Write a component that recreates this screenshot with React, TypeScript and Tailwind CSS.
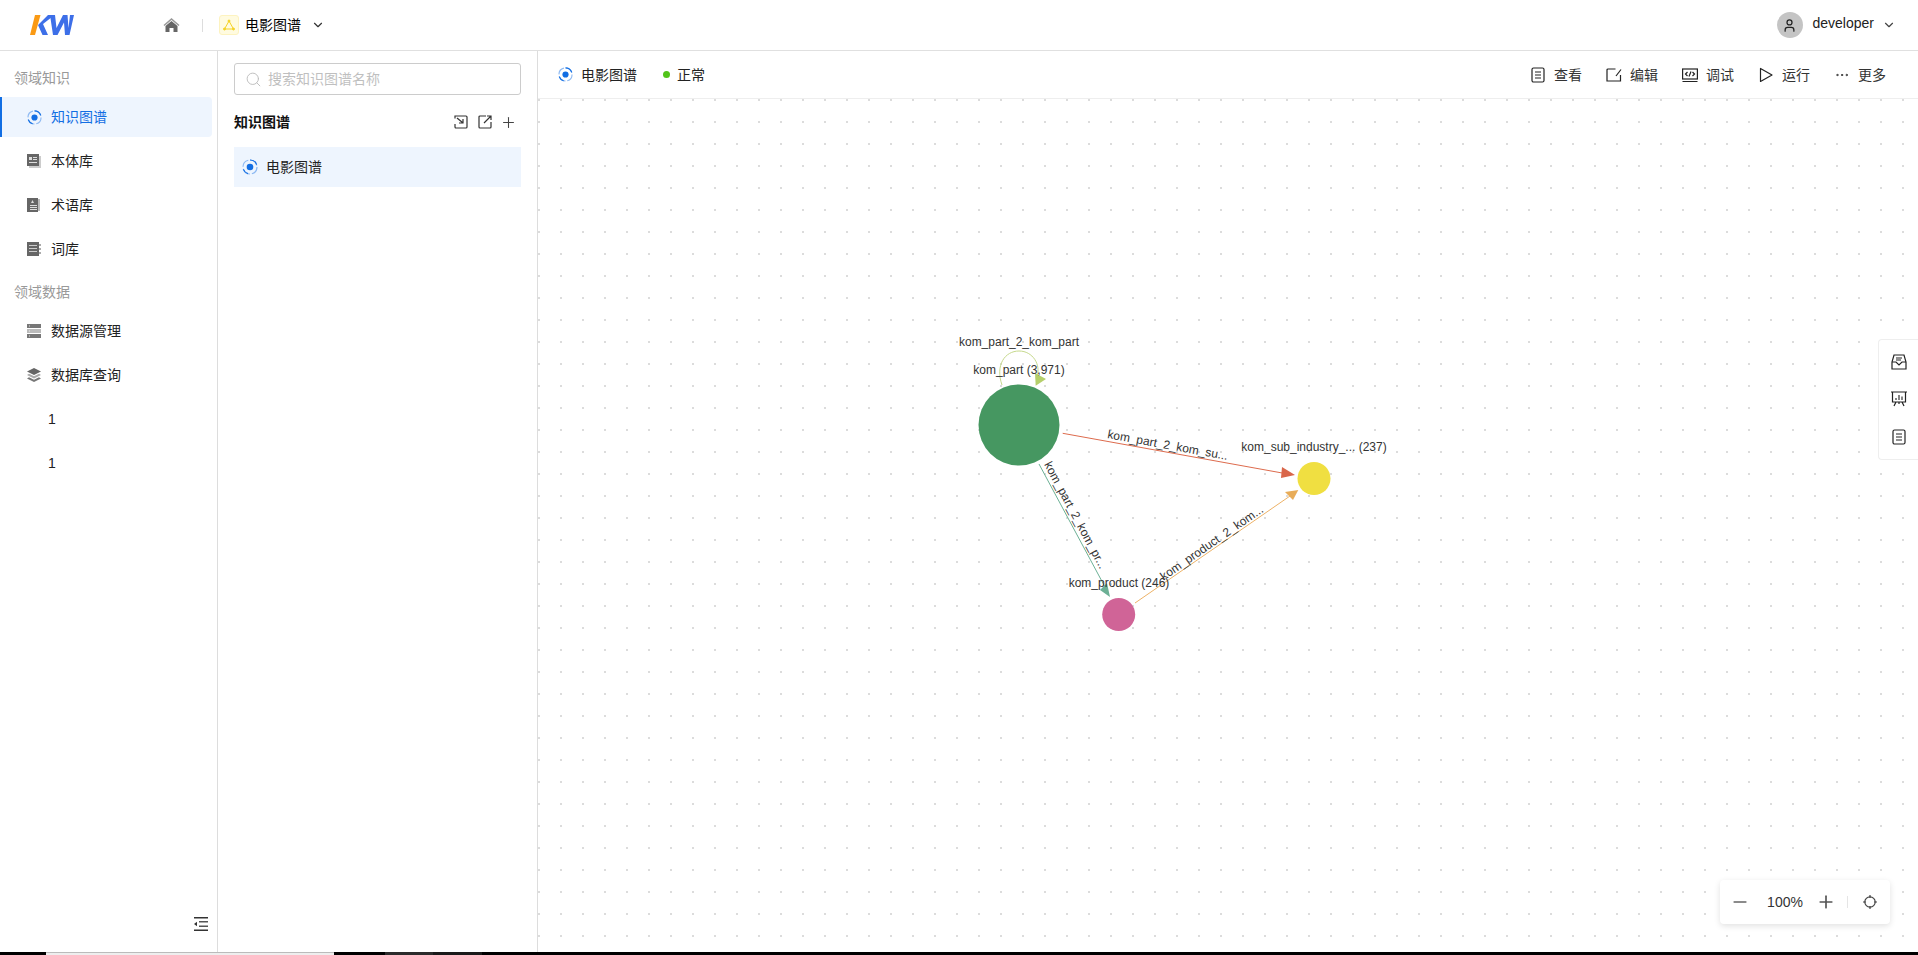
import type { ReactNode } from 'react';
import { ChevronDown, Search, Plus, Minus, User, Ellipsis } from 'lucide-react';

const FONT = '"Liberation Sans", "Noto Sans CJK SC", sans-serif';

function GraphIcon({ size = 16 }: { size?: number }) {
  return (
    <svg className="shrink-0" width={size} height={size} viewBox="0 0 16 16" fill="none">
      <circle cx="8" cy="8" r="7" stroke="#8db9f2" strokeWidth="1.2" strokeDasharray="9 2" />
      <path d="M8 1a7 7 0 0 1 6.600 4.600M1.400 10.400A7 7 0 0 0 6 14.700" stroke="#126ee3" strokeWidth="1.2" />
      <circle cx="8" cy="8" r="3.300" fill="#126ee3" />
    </svg>
  );
}

function BookIcon() {
  return (
    <svg width="14" height="14" viewBox="0 0 14 14">
      <rect x="0" y="0" width="12" height="12" fill="#666" />
      <rect x="12" y="2" width="2" height="12" fill="#ccc" />
      <rect x="2" y="12" width="12" height="2" fill="#ccc" />
      <rect x="2" y="3" width="3" height="3" fill="#ddd" />
      <rect x="6" y="3" width="4" height="1" fill="#ddd" />
      <rect x="6" y="5" width="4" height="1" fill="#ddd" />
      <rect x="2" y="8" width="8" height="1" fill="#ddd" />
    </svg>
  );
}

function TermIcon() {
  return (
    <svg width="14" height="14" viewBox="0 0 14 14">
      <rect x="0" y="0" width="11" height="14" fill="#666" />
      <rect x="11" y="1" width="2" height="12" fill="#bbb" />
      <path d="M4 5l1.500-3L7 5z" fill="#ddd" />
      <rect x="3" y="7" width="7" height="1" fill="#ddd" />
      <rect x="3" y="9" width="7" height="1" fill="#ddd" />
      <rect x="3" y="11" width="7" height="1" fill="#ddd" />
    </svg>
  );
}

function LexiconIcon() {
  return (
    <svg width="14" height="14" viewBox="0 0 14 14">
      <rect x="0" y="0" width="12" height="14" fill="#666" />
      <rect x="12" y="2" width="2" height="2" fill="#aaa" />
      <rect x="12" y="6" width="2" height="2" fill="#aaa" />
      <rect x="12" y="10" width="2" height="2" fill="#aaa" />
      <rect x="2" y="3" width="8" height="1" fill="#ccc" />
      <rect x="2" y="6" width="8" height="1" fill="#ccc" />
      <rect x="2" y="9" width="8" height="1" fill="#ccc" />
    </svg>
  );
}

function ServerIcon() {
  return (
    <svg width="14" height="14" viewBox="0 0 14 14">
      <rect x="0" y="0" width="14" height="4" fill="#777" />
      <rect x="0" y="5" width="14" height="4" fill="#bbb" />
      <rect x="0" y="10" width="14" height="4" fill="#777" />
      <rect x="2" y="1.500" width="1" height="1" fill="#ddd" />
      <rect x="2" y="6.500" width="1" height="1" fill="#eee" />
      <rect x="2" y="11.500" width="1" height="1" fill="#ddd" />
    </svg>
  );
}

function LayersIcon() {
  return (
    <svg width="14" height="14" viewBox="0 0 14 14">
      <path d="M7 0l7 3.500L7 7 0 3.500z" fill="#666" />
      <path d="M2 5.800L7 8.300l5-2.500 2 1.100L7 10.400 0 6.900z" fill="#aaa" />
      <path d="M2 9.300l5 2.500 5-2.500 2 1.100L7 14l-7-3.600z" fill="#777" />
    </svg>
  );
}

function DocIcon() {
  return (
    <svg width="16" height="16" viewBox="0 0 16 16" fill="none" stroke="#222" strokeWidth="1.200">
      <rect x="2" y="1" width="12" height="14" rx="1.500" />
      <path d="M5 5h6M5 8h6M5 11h6" />
    </svg>
  );
}

function EditIcon() {
  return (
    <svg width="16" height="16" viewBox="0 0 16 16" fill="none" stroke="#222" strokeWidth="1.200">
      <path d="M9.500 2H2a1 1 0 0 0-1 1v11h13.500V8" />
      <path d="M10 9l5-6.500" />
    </svg>
  );
}

function CodeIcon() {
  return (
    <svg width="16" height="16" viewBox="0 0 16 16" fill="none" stroke="#222" strokeWidth="1.200">
      <rect x="0.600" y="2" width="14.800" height="10" />
      <path d="M0.500 14.500h15M5.500 5L3.500 7l2 2M10.500 5l2 2-2 2M9 4.500L7 9.500" />
    </svg>
  );
}

function PlayIcon() {
  return (
    <svg width="16" height="16" viewBox="0 0 16 16" fill="none" stroke="#222" strokeWidth="1.200">
      <path d="M2.500 1.500v13L14 8z" strokeLinejoin="round" />
    </svg>
  );
}

function ImportIcon() {
  return (
    <svg width="14" height="14" viewBox="0 0 14 14" fill="none" stroke="#333" strokeWidth="1.200">
      <path d="M1 3.500V1h11a1 1 0 0 1 1 1v10a1 1 0 0 1-1 1H2a1 1 0 0 1-1-1V9" />
      <path d="M3 3l5.500 4.500M9 4v4H5" />
    </svg>
  );
}

function ExportIcon() {
  return (
    <svg width="14" height="14" viewBox="0 0 14 14" fill="none" stroke="#333" strokeWidth="1.200">
      <path d="M8 1H2a1 1 0 0 0-1 1v10a1 1 0 0 0 1 1h10a1 1 0 0 0 1-1V7" />
      <path d="M6 8l6.500-6.500M9 1h4v4" />
    </svg>
  );
}

function HomeIcon() {
  return (
    <svg width="17" height="14" viewBox="0 0 16 14">
      <path d="M8 0L0 7l1 1 7-6 7 6 1-1z" fill="#999" />
      <path d="M8 3L2 8v6h4v-4h4v4h4V8z" fill="#666" />
    </svg>
  );
}

function KwLogo() {
  return (
    <svg width="44" height="20" viewBox="0 0 44 20">
      <path d="M5 0h5.500L5 20H0z" fill="#fa9a14" />
      <path d="M18 0h6.500L13 9l5 11h-5.500L8 10z" fill="#3d6fe8" />
      <path d="M20 0h5l1.500 13L33 0h4.500l1 13L40 0h4l-4.500 20h-4.500l-1-12.500L27.500 20H23z" fill="#3d6fe8" />
    </svg>
  );
}

function CollapseIcon() {
  return (
    <svg width="14" height="14" viewBox="0 0 14 14">
      <rect x="0" y="0" width="14" height="1.500" fill="#333" />
      <rect x="5" y="4" width="9" height="1.500" fill="#555" />
      <rect x="5" y="8.500" width="9" height="1.500" fill="#555" />
      <rect x="0" y="12.500" width="14" height="1.500" fill="#333" />
      <path d="M0 7l3-2.200v4.400z" fill="#333" />
    </svg>
  );
}

function InboxIcon() {
  return (
    <svg width="16" height="16" viewBox="0 0 16 16" fill="none" stroke="#222" strokeWidth="1.200">
      <path d="M3 1h10l2 7v7H1V8z" />
      <path d="M1 8h4l3 3 3-3h4M5 4h6M5 6h5" />
    </svg>
  );
}

function BoardIcon() {
  return (
    <svg width="16" height="16" viewBox="0 0 16 16" fill="none" stroke="#222" strokeWidth="1.200">
      <path d="M0 1h16M1.500 1v10h13V1M5 11l-2 4M11 11l2 4M8 11v2" />
      <path d="M5 9V7M8 9V4M11 9V5.500" strokeWidth="1.600" stroke="#666" />
    </svg>
  );
}

function CrosshairIcon() {
  return (
    <svg width="14" height="14" viewBox="0 0 14 14" fill="none" stroke="#444" strokeWidth="1.200">
      <circle cx="7" cy="7" r="5.200" />
      <path d="M7 0v3M7 11v3M0 7h3M11 7h3" />
    </svg>
  );
}

function GroupTitle({ children, className }: { children: ReactNode; className?: string }) {
  return <div className={`pl-[14px] h-[28px] leading-[28px] text-sm text-[#999] ${className ?? ''}`}>{children}</div>;
}

function MenuItem({ icon, label, active }: { icon?: ReactNode; label: string; active?: boolean }) {
  return (
    <div
      className={
        active
          ? 'flex items-center h-10 w-[212px] pl-[25px] border-l-2 border-[#126ee3] bg-[#eef5fe] rounded-r text-sm text-[#126ee3]'
          : 'flex items-center h-10 w-[212px] pl-[27px] text-sm text-[#222]'
      }
    >
      {icon ? <span className="w-[14px] mr-[10px] flex justify-center shrink-0">{icon}</span> : <span className="w-[21px]" />}
      <span>{label}</span>
    </div>
  );
}

function ToolbarButton({ icon, label }: { icon: ReactNode; label: string }) {
  return (
    <div className="flex items-center gap-2 text-sm text-[#333]">
      {icon}
      <span>{label}</span>
    </div>
  );
}

function GraphDiagram() {
  const label = { fontFamily: FONT, fontSize: 12, fill: '#333' };
  return (
    <svg className="absolute inset-0 w-full h-full" viewBox="538 99 1380 853">
      <path d="M1002 385C995 365 1005 351 1019 351C1033 351 1041 365 1037 376" fill="none" stroke="#c6d98c" strokeWidth="1" />
      <polygon points="1035.700,385.700 1035,373 1046,379" fill="#b5cf6b" />
      <line x1="1062.700" y1="433.300" x2="1285" y2="473.500" stroke="#dd6b4d" strokeWidth="1" />
      <polygon points="1295,475 1282,467 1281,478" fill="#d9664a" />
      <line x1="1039" y1="464" x2="1105" y2="587" stroke="#6cb095" strokeWidth="1" />
      <polygon points="1110,597 1100,590 1107,583" fill="#6cb095" />
      <line x1="1135" y1="603" x2="1290" y2="496" stroke="#edb267" strokeWidth="1" />
      <polygon points="1298.300,490 1285,492 1293,500" fill="#e8ac58" />

      <circle cx="1019" cy="425" r="40.500" fill="#469761" />
      <circle cx="1314" cy="478.500" r="16.500" fill="#f0df41" />
      <circle cx="1118.700" cy="614.500" r="16.500" fill="#d06497" />

      <text {...label} x="1019" y="346" textAnchor="middle">kom_part_2_kom_part</text>
      <text {...label} x="1019" y="374" textAnchor="middle">kom_part (3,971)</text>
      <text {...label} x="1314" y="451" textAnchor="middle">kom_sub_industry_... (237)</text>
      <text {...label} x="1119" y="587" textAnchor="middle">kom_product (246)</text>
      <text {...label} textAnchor="middle" transform="translate(1167 449) rotate(10.300)">kom_part_2_kom_su...</text>
      <text {...label} textAnchor="middle" transform="translate(1072 517) rotate(61.900)">kom_part_2_kom_pr...</text>
      <text {...label} textAnchor="middle" transform="translate(1214 546) rotate(-34.700)">kom_product_2_kom...</text>
    </svg>
  );
}

export default function App() {
  return (
    <div className="w-[1918px] h-[955px] flex flex-col bg-white overflow-hidden" style={{ fontFamily: FONT }}>
      {/* Header */}
      <header className="h-[51px] shrink-0 flex items-center border-b border-[#e0e0e0] pl-[30px] pr-[22px]">
        <KwLogo />
        <span className="ml-[89px]"><HomeIcon /></span>
        <span className="ml-[22px] w-px h-[13px] bg-[#ddd]" />
        <span className="ml-[16px] w-5 h-5 flex items-center justify-center rounded-[3px] bg-[#fffbe0] border border-[#fdf3c0]">
          <svg width="12" height="12" viewBox="0 0 12 12" fill="none" stroke="#f5d327" strokeWidth="1">
            <path d="M6 2L1.500 10h9z" />
            <circle cx="6" cy="2" r="1" fill="#f5d327" />
            <circle cx="1.500" cy="10" r="1" fill="#f5d327" />
            <circle cx="10.500" cy="10" r="1" fill="#f5d327" />
          </svg>
        </span>
        <span className="ml-[6px] text-sm text-black">电影图谱</span>
        <ChevronDown className="ml-[10px] text-[#333]" size={14} />
        <div className="ml-auto flex items-center">
          <span className="w-[26px] h-[26px] rounded-full bg-[#c4c4c4] flex items-center justify-center">
            <User size={15} className="text-[#222]" />
          </span>
          <span className="ml-[10px] text-sm text-[#222] -mt-1">developer</span>
          <ChevronDown className="ml-2 text-[#444]" size={14} />
        </div>
      </header>

      <div className="flex-1 flex min-h-0">
        {/* Sidebar */}
        <aside className="w-[218px] shrink-0 border-r border-[#ddd] flex flex-col pt-[13px] pb-[21px]">
          <GroupTitle>领域知识</GroupTitle>
          <div className="mt-[5px] flex flex-col gap-1">
            <MenuItem icon={<GraphIcon size={15} />} label="知识图谱" active />
            <MenuItem icon={<BookIcon />} label="本体库" />
            <MenuItem icon={<TermIcon />} label="术语库" />
            <MenuItem icon={<LexiconIcon />} label="词库" />
          </div>
          <GroupTitle className="mt-[9px]">领域数据</GroupTitle>
          <div className="mt-[5px] flex flex-col gap-1">
            <MenuItem icon={<ServerIcon />} label="数据源管理" />
            <MenuItem icon={<LayersIcon />} label="数据库查询" />
            <MenuItem label="1" />
            <MenuItem label="1" />
          </div>
          <div className="mt-auto flex justify-end pr-[9px]"><CollapseIcon /></div>
        </aside>

        {/* Graph list */}
        <section className="w-[320px] shrink-0 border-r border-[#ddd] pl-4 pr-4 pt-3">
          <div className="h-8 flex items-center border border-[#ccc] rounded-[3px] pl-[10px]">
            <Search size={17} className="text-[#bbb]" strokeWidth={1.300} />
            <span className="ml-[6px] text-sm text-[#bfbfbf]">搜索知识图谱名称</span>
          </div>
          <div className="mt-[12px] h-[30px] flex items-center">
            <span className="text-sm font-bold text-[#111]">知识图谱</span>
            <div className="ml-auto flex items-center pr-[4px]">
              <ImportIcon />
              <span className="ml-[10px]"><ExportIcon /></span>
              <Plus size={17} className="ml-2 text-[#444]" strokeWidth={1.500} />
            </div>
          </div>
          <div className="mt-[10px] h-10 flex items-center bg-[#eef5fe] pl-2">
            <GraphIcon size={16} />
            <span className="ml-2 text-sm text-[#222]">电影图谱</span>
          </div>
        </section>

        {/* Canvas area */}
        <main className="flex-1 min-w-0 flex flex-col">
          <div className="h-[48px] shrink-0 flex items-center border-b border-[#eee] pl-5 pr-8">
            <GraphIcon size={15} />
            <span className="ml-[8px] text-sm text-[#222]">电影图谱</span>
            <span className="ml-[26px] w-[7px] h-[7px] rounded-full bg-[#52c41a]" />
            <span className="ml-[7px] text-sm text-[#222]">正常</span>
            <div className="ml-auto flex items-center gap-6">
              <ToolbarButton icon={<DocIcon />} label="查看" />
              <ToolbarButton icon={<EditIcon />} label="编辑" />
              <ToolbarButton icon={<CodeIcon />} label="调试" />
              <ToolbarButton icon={<PlayIcon />} label="运行" />
              <ToolbarButton icon={<Ellipsis size={16} strokeWidth={1.500} />} label="更多" />
            </div>
          </div>
          <div className="flex-1 relative bg-[radial-gradient(circle_at_1px_1px,#dcdcdc_1px,transparent_1px)] bg-[size:22px_22px]">
            <GraphDiagram />

            {/* Side tools */}
            <div className="absolute right-0 top-[240px] w-10 h-[121px] flex flex-col items-center justify-around py-[3px] bg-white border border-r-0 border-[#eee] rounded-l">
              <InboxIcon />
              <BoardIcon />
              <DocIcon />
            </div>

            {/* Zoom control */}
            <div className="absolute right-[28px] bottom-[28px] w-[170px] h-[44px] flex items-center bg-white rounded shadow-[0_2px_6px_rgba(0,0,0,0.12)] pl-[10px]">
              <Minus size={20} className="text-[#666]" />
              <span className="ml-[16px] w-[38px] text-sm text-[#333] text-center">100%</span>
              <Plus size={20} className="ml-[12px] text-[#555]" />
              <span className="ml-[11px] w-px h-3 bg-[#e5e5e5]" />
              <span className="ml-[15px]"><CrosshairIcon /></span>
            </div>
          </div>
        </main>
      </div>

      {/* Window edge */}
      <div className="h-[3px] shrink-0 flex bg-black">
        <div className="ml-[46px] w-[288px] bg-[#eee] border-t border-[#bbb]" />
        <div className="ml-[51px] w-[48px] bg-[#2b2b2b]" />
        <div className="w-[49px] bg-[#1a1a1a]" />
      </div>
    </div>
  );
}
